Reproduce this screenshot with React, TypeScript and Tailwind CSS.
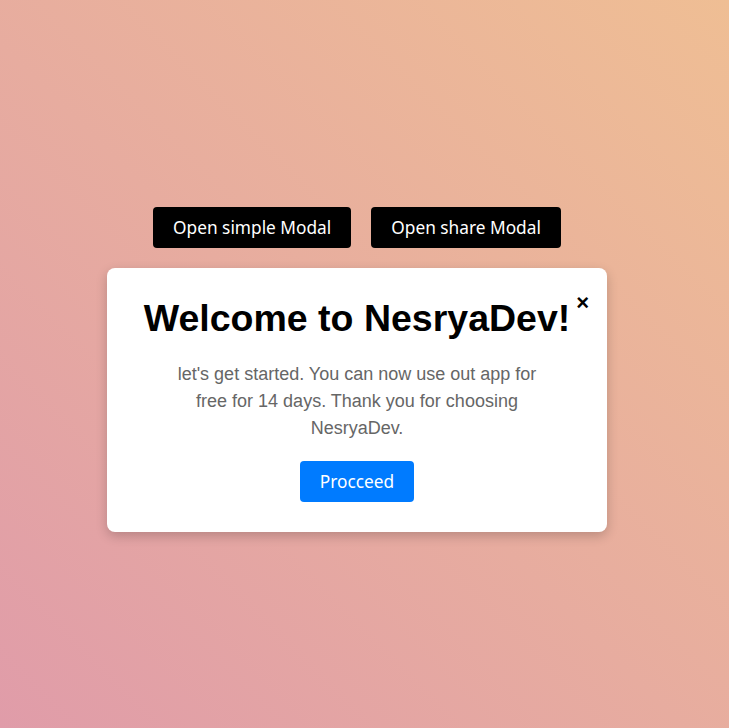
export default function App() {
  return (
    <div className="min-h-screen w-full bg-[linear-gradient(to_top_right,#e09ca9,#efbe94)]">
      <div className="flex w-[714px] flex-col items-center pt-[207px]">
        <div className="flex gap-5">
          <button className="h-[41px] rounded-[4px] bg-black px-5 font-['Noto_Sans',sans-serif] text-[17.3px] text-white">
            Open simple Modal
          </button>
          <button className="h-[41px] rounded-[4px] bg-black px-5 font-['Noto_Sans',sans-serif] text-[17.3px] text-white">
            Open share Modal
          </button>
        </div>

        {/* modal */}
        <div className="relative mt-5 flex w-[500px] flex-col items-center rounded-lg bg-white pt-[27px] pb-[30px] shadow-[0_4px_12px_rgba(0,0,0,0.2)]">
          <button className="absolute right-[18px] top-[24px] font-['Liberation_Sans',sans-serif] text-[22px] font-bold leading-none text-black">
            ×
          </button>
          <h1 className="font-['Liberation_Sans',Arial,sans-serif] text-[37.5px] font-bold leading-[47px] text-black">
            Welcome to NesryaDev!
          </h1>
          <p className="mt-[19px] w-[370px] text-center font-['Liberation_Sans',Arial,sans-serif] text-[18px] leading-[27px] text-[#666]">
            let's get started. You can now use out app for free for 14 days. Thank you for choosing NesryaDev.
          </p>
          <button className="mt-[19px] h-[41px] rounded-[4px] bg-[#007bff] px-5 font-['Noto_Sans',sans-serif] text-[17.3px] text-white">
            Procceed
          </button>
        </div>
      </div>
    </div>
  );
}
